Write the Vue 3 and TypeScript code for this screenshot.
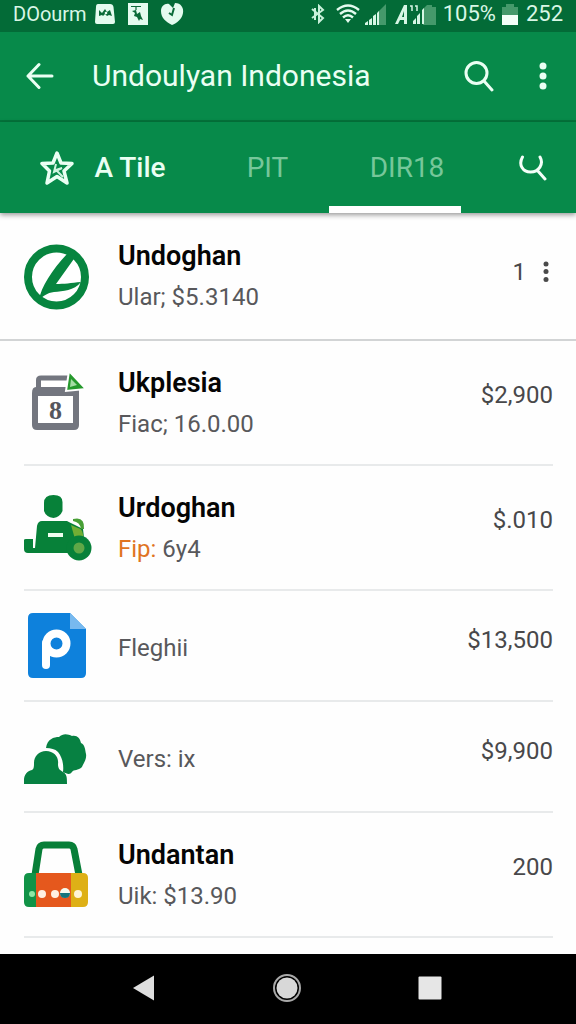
<script setup lang="ts">
import { ref } from 'vue'

interface Entry {
  icon: 'leaf' | 'calendar' | 'tractor' | 'file' | 'people' | 'bag'
  title?: string
  lead?: string
  detail: string
  amount: string
  menu?: boolean
}

const tabs = ['A Tile', 'PIT', 'DIR18']
const active = ref(2)

const entries: Entry[] = [
  { icon: 'leaf', title: 'Undoghan', detail: 'Ular; $5.3140', amount: '1', menu: true },
  { icon: 'calendar', title: 'Ukplesia', detail: 'Fiac; 16.0.00', amount: '$2,900' },
  { icon: 'tractor', title: 'Urdoghan', lead: 'Fip:', detail: '6y4', amount: '$.010' },
  { icon: 'file', detail: 'Fleghii', amount: '$13,500' },
  { icon: 'people', detail: 'Vers: ix', amount: '$9,900' },
  { icon: 'bag', title: 'Undantan', detail: 'Uik: $13.90', amount: '200' },
]
</script>

<template>
  <div class="screen">
    <div class="status">
      <span class="carrier">DOourm</span>
      <svg class="badge" width="20" height="22" viewBox="0 0 20 22">
        <path d="M3 1H15Q18 1 18.5 4L20 19Q20 21 18 21H2Q0 21 0 19L1 4Q1 1 3 1Z" fill="#e4fbef" />
        <path d="M4 13V7L7 10L10 6L12 9L15 7L17 13L14 12L12 13L10 11L8 13L7 12Z" fill="#0b6a38" />
        <circle cx="11" cy="10" r="1.3" fill="#e4fbef" />
      </svg>
      <svg class="badge" width="20" height="22" viewBox="0 0 20 22">
        <path d="M0 0H20V22H0Z" fill="#e4fbef" />
        <path d="M3 3.500H13M8 4V7" fill="none" stroke="#0b6a38" stroke-width="1.200" />
        <path d="M4 8L8 7L9 11L12 9L13 13L15 17L12 16L11 18L9 14L6 13L7 10Z" fill="#0b6a38" />
      </svg>
      <svg class="badge" width="23" height="22" viewBox="0 0 23 22">
        <path d="M11 22C5 19 0 15 0 8C0 3 4 0 8 1L12 5L14 0C20 0 23 5 22 10C21 16 16 20 11 22Z" fill="#e4fbef" />
        <path d="M8 10L11 12L13 5" fill="none" stroke="#0b6a38" stroke-width="2" />
      </svg>
      <span class="spacer"></span>
      <svg width="14" height="20" viewBox="0 0 14 20" fill="none" stroke="#c9f0da" stroke-width="2">
        <path d="M1 5L12 14L8 18V2L12 6L1 14M4 4V16" />
      </svg>
      <svg class="wifi" width="24" height="20" viewBox="0 0 24 20" fill="none" stroke="#e4fbef" stroke-width="2.400">
        <path d="M1 6Q12 -3 23 6M4 10Q12 3 20 10M7 13.500Q12 9 17 13.500" />
        <path d="M9 15H15L12 19Z" fill="#e4fbef" stroke="none" />
      </svg>
      <svg class="signal" width="21" height="21" viewBox="0 0 21 21">
        <path d="M13 8L21 0V21H13Z" fill="#45996b" />
        <path d="M0 21V19L3 17V21ZM4 21V16L7 14V21ZM8 21V12L11 10V21ZM12 21V9L14 7V21Z" fill="#d6f6e4" />
      </svg>
      <svg class="cell" width="41" height="21" viewBox="0 0 41 21">
        <path d="M28 5L32 1H37V3H41V21H28Z" fill="#45996b" />
        <path d="M0 20L9 1H12V20H9V16H5L3 20ZM7 13H9V7Z" fill="#d6f6e4" fill-rule="evenodd" />
        <path d="M15 2H17V7M20 2H22V7" fill="none" stroke="#d6f6e4" stroke-width="1.500" />
        <path d="M18 20V17L21 14V20ZM22 20V12L25 9V20ZM27 20V6L29 4V20Z" fill="#d6f6e4" />
      </svg>
      <span class="percent">105%</span>
      <svg class="battery" width="16" height="21" viewBox="0 0 16 21">
        <path d="M0 3H4V0H12V3H16V12H0Z" fill="#45996b" />
        <path d="M0 11H16V21H0Z" fill="#f2fff8" />
      </svg>
      <span>252</span>
    </div>

    <header class="appbar">
      <button class="icon-button" aria-label="Back">
        <svg width="28" height="28" viewBox="0 0 28 28" fill="none" stroke="#eafff3" stroke-width="3" stroke-linecap="round" stroke-linejoin="round">
          <path d="M26 14H2M13 2.500L2 14L13 25.500" />
        </svg>
      </button>
      <h1>Undoulyan Indonesia</h1>
      <button class="icon-button" aria-label="Search">
        <svg width="30" height="32" viewBox="0 0 30 32" fill="none" stroke="#eafff3" stroke-width="3" stroke-linecap="round">
          <circle cx="12.500" cy="13" r="10.500" />
          <path d="M20 21L28 30" />
        </svg>
      </button>
      <button class="icon-button more" aria-label="More options">
        <svg width="8" height="28" viewBox="0 0 8 28" fill="#eafff3">
          <circle cx="4" cy="4" r="3.500" /><circle cx="4" cy="14" r="3.500" /><circle cx="4" cy="24" r="3.500" />
        </svg>
      </button>
    </header>

    <nav class="tabs">
      <button
        v-for="(tab, i) in tabs"
        :key="tab"
        class="tab"
        :class="{ first: i === 0, active: i === active }"
        @click="active = i"
      >
        <svg v-if="i === 0" width="34" height="36" viewBox="0 0 34 36">
          <path d="M17 3L21 13L32 13.500L24 21L27 33L17 26.500L7 33L9.500 21L2 13.500L13 13Z" fill="none" stroke="#eafff3" stroke-width="3.500" stroke-linejoin="round" />
          <path d="M16 14L14 22L22 18L16 20L23 27" fill="none" stroke="#d0f5e0" stroke-width="2" />
        </svg>
        {{ tab }}
      </button>
      <button class="icon-button tab-search" aria-label="Search list">
        <svg width="28" height="26" viewBox="0 0 28 26" fill="none" stroke="#f4fff9" stroke-width="3" stroke-linecap="round">
          <path d="M3.500 2C-1 10 4 17 11.500 17C20 17 25 9 21 2M18 15L26 24" />
        </svg>
      </button>
    </nav>

    <main class="list">
      <article v-for="(e, i) in entries" :key="i" class="row" :class="{ lead: i === 0, single: !e.title }">
        <svg v-if="e.icon === 'leaf'" class="pic" viewBox="0 -1 68 68">
          <circle cx="32.500" cy="34" r="28.500" fill="#fff" stroke="#07853f" stroke-width="8" />
          <path d="M43 11L52 13L32 41C40 41 47 40 57 39C50 48 39 48 30 49C23 50 19 53 15 57C17 44 28 27 43 11Z" fill="#07853f" />
        </svg>

        <svg v-else-if="e.icon === 'calendar'" class="pic" viewBox="0 -1 68 68">
          <path d="M14.500 24V10Q14.500 8 17 8H44" fill="none" stroke="#73767f" stroke-width="5" />
          <path d="M12 17H52Q55 17 55 21V55Q55 60 50 60H13Q8 60 8 55V23Q8 17 12 17Z" fill="#73767f" />
          <path d="M17 11H42L44 17H17Z" fill="#fff" />
          <path d="M14 26H49V53H14Z" fill="#fff" />
          <text x="31.500" y="49" text-anchor="middle" class="cal-digit">8</text>
          <path d="M45 1L62 19L42 21Z" fill="#26992d" stroke="#fff" stroke-width="2" />
          <path d="M47 9L53 15L46 17Z" fill="#a5dda5" />
        </svg>

        <svg v-else-if="e.icon === 'tractor'" class="pic" viewBox="0 0 68 68">
          <path d="M20 9Q20 1 29.500 1Q39 1 38.500 9V17Q36 23 29.500 24Q22 23 20 17Z" fill="#078139" />
          <path d="M18 27H43Q49 30 59 35Q60 42 60 46L50 59H4Q0 59 0 55V46Q0 45 2 45H9V54H11L13 32Q14 27 18 27Z" fill="#078139" />
          <path d="M47 31L54 34Q60 35 59 45H51Q49 38 47 31Z" fill="#72ae34" />
          <path d="M49 25Q61 22 60 35H57Q56 28 49 27Z" fill="#489f36" />
          <path d="M24 39H39V43H24Z" fill="#effff0" />
          <circle cx="55" cy="54" r="12.500" fill="#078139" />
          <circle cx="55" cy="54" r="5.500" fill="#5fa747" />
        </svg>

        <svg v-else-if="e.icon === 'file'" class="pic" viewBox="0 0 68 68">
          <path d="M9 1H46L62 17V61Q62 66 57 66H9Q4 66 4 61V6Q4 1 9 1Z" fill="#0e81dc" />
          <path d="M46 1L62 17H46Z" fill="#77b9ef" />
          <circle cx="32.500" cy="31.500" r="10" fill="none" stroke="#fff" stroke-width="8" />
          <path d="M22 31V53" stroke="#fff" stroke-width="8" stroke-linecap="round" />
        </svg>

        <svg v-else-if="e.icon === 'people'" class="pic" viewBox="0 -3 68 68">
          <path d="M22 22C23 13 30 11 35 11C39 7 44 8 48 10C53 9 56 12 57 17C61 19 61 23 62 28C63 33 59 38 58 41C54 45 50 43 48 46C46 49 43 48 39 46C40 38 38 31 34 26C31 23 27 22 22 22Z" fill="#078142" />
          <path d="M0 58V54C0 49 3 45 8 44C10 43 10 40 10 37C10 30 15 25 22 25C30 25 35 31 34 38C34 43 36 44 39 46C43 48 43 52 43 58Z" fill="#078142" />
        </svg>

        <svg v-else class="pic" viewBox="0 1 68 68">
          <path d="M11 35L15 9Q16 5 20 5H45Q49 5 50 9L55 35" fill="none" stroke="#087f38" stroke-width="7" />
          <path d="M5 33H13V67H5Q0 67 0 62V38Q0 33 5 33Z" fill="#119347" />
          <path d="M12 33H47V67H12Z" fill="#e5581d" />
          <path d="M47 33H59Q64 33 64 38V62Q64 67 59 67H47Z" fill="#deb016" />
          <circle cx="8" cy="54" r="3" fill="#8de9a5" />
          <circle cx="18" cy="54" r="4" fill="#fff0e2" />
          <circle cx="31" cy="54" r="4" fill="#fff0e2" />
          <circle cx="41" cy="53" r="5" fill="#f4fbef" />
          <path d="M36 53H46Q46 58 41 58Q36 58 36 53Z" fill="#14757c" />
          <circle cx="54" cy="54" r="4" fill="#fff5d5" />
        </svg>

        <div class="copy">
          <h2 v-if="e.title">{{ e.title }}</h2>
          <p><span v-if="e.lead" class="accent">{{ e.lead }}</span> {{ e.detail }}</p>
        </div>
        <span class="amount">{{ e.amount }}</span>
        <button v-if="e.menu" class="icon-button row-menu" aria-label="Item options">
          <svg width="6" height="22" viewBox="0 0 6 22" fill="#4a4a4a">
            <circle cx="3" cy="3" r="2.500" /><circle cx="3" cy="10.500" r="2.500" /><circle cx="3" cy="18.500" r="2.500" />
          </svg>
        </button>
      </article>
    </main>

    <footer class="system">
      <button class="icon-button" aria-label="System back">
        <svg width="22" height="26" viewBox="0 0 22 26"><path d="M0 13L21 0.500V25.500Z" fill="#dedede" /></svg>
      </button>
      <button class="icon-button" aria-label="Home">
        <svg width="30" height="30" viewBox="0 0 30 30">
          <circle cx="15" cy="15" r="13" fill="none" stroke="#a9a9a9" stroke-width="2" />
          <circle cx="15" cy="15" r="10.500" fill="#d8d8d8" />
        </svg>
      </button>
      <button class="icon-button" aria-label="Recent apps">
        <svg width="24" height="24" viewBox="0 0 24 24"><rect x="0.500" y="0.500" width="23" height="23" rx="1" fill="#e6e6e6" /></svg>
      </button>
    </footer>
  </div>
</template>

<style>
body {
  margin: 0;
}
</style>

<style scoped>
.screen {
  display: flex;
  flex-direction: column;
  min-height: 100vh;
  background: #fefefe;
  font-family: Roboto, "Liberation Sans", sans-serif;
}

h1,
h2,
p {
  margin: 0;
}

svg {
  display: block;
  flex: none;
}

button {
  padding: 0;
  border: 0;
  background: none;
  font: inherit;
  color: inherit;
  cursor: pointer;
}

.icon-button {
  display: flex;
  align-items: center;
  justify-content: center;
}

.status {
  display: flex;
  align-items: center;
  height: 32px;
  padding: 0 13px 4px;
  box-sizing: border-box;
  background: #036b37;
  color: #d9f7e6;
  font-size: 22px;
  line-height: 28px;
  white-space: nowrap;
}

.carrier {
  width: 82px;
  font-size: 20px;
}

.badge {
  margin-right: 13px;
}

.spacer {
  flex: 1;
}

.wifi {
  margin-left: 11px;
}

.signal {
  margin-left: 5px;
}

.cell {
  margin: 0 7px 0 9px;
}

.battery {
  margin: 0 8px 0 6px;
}

.appbar {
  display: flex;
  align-items: center;
  height: 90px;
  box-sizing: border-box;
  padding: 0 29px 0 26px;
  background: #078a4a;
  border-bottom: 2px solid #04743b;
  color: #eafff3;
}

h1 {
  flex: 1;
  margin-left: 38px;
  font-size: 30px;
  line-height: 40px;
  font-weight: 400;
  white-space: nowrap;
}

.more {
  margin-left: 45px;
}

.tabs {
  position: relative;
  display: grid;
  grid-template-columns: 206fr 123fr 132fr 115fr;
  height: 91px;
  background: #078a4a;
  color: #76c79a;
  font-size: 28px;
  box-shadow: 0 2px 5px rgba(0, 0, 0, 0.4);
}

.tab {
  display: flex;
  align-items: center;
  justify-content: center;
  border-top: 7px solid transparent;
  border-bottom: 7px solid transparent;
}

.tab.first {
  gap: 20px;
  color: #eafff3;
  font-weight: 500;
}

.tab.active {
  padding-left: 24px;
  border-bottom-color: #fff;
}

.tab-search {
  padding-left: 28px;
}

.list {
  flex: 1;
}

.row {
  display: flex;
  align-items: center;
  height: 125px;
  box-sizing: border-box;
  margin: 0 23px 0 24px;
  border-bottom: 2px solid #e8eaeb;
  color: #58585b;
  font-size: 24px;
}

.row.lead {
  height: 128px;
  margin: 0;
  padding: 0 23px 0 24px;
  border-color: #d2d4d5;
}

.row.single {
  height: 111px;
}

.pic {
  width: 68px;
  height: 68px;
}

.cal-digit {
  font: bold 26px "Liberation Serif", serif;
  fill: #55565d;
}

.copy {
  flex: 1;
  min-width: 0;
  margin-left: 26px;
}

h2 {
  color: #050505;
  font-size: 27px;
  line-height: 42px;
  font-weight: 600;
}

p {
  line-height: 40px;
}

.single p {
  padding-top: 4px;
}

.accent {
  color: #e07422;
}

.amount {
  padding-bottom: 16px;
  color: #48484a;
  line-height: 32px;
}

.single .amount {
  padding-bottom: 12px;
}

.lead .amount,
.row-menu {
  padding-bottom: 8px;
}

.row-menu {
  margin: 0 4px 0 17px;
}

.system {
  display: grid;
  grid-template-columns: repeat(3, 1fr);
  height: 70px;
  padding: 0 74px 2px 72px;
  box-sizing: border-box;
  background: #000;
}
</style>
